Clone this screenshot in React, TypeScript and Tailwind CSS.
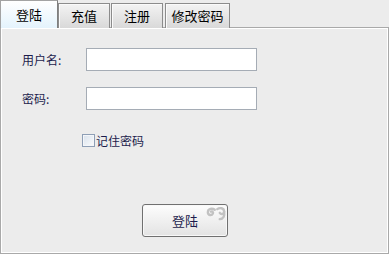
const font = { fontFamily: '"Noto Sans CJK SC", "Liberation Sans", sans-serif' }

function Tab({ label, active, width }: { label: string; active?: boolean; width: string }) {
  if (active) {
    return (
      <div
        className={`${width} h-[28px] flex items-center justify-center border border-b-0 border-[#a3a3a3] border-r-[#7f7f7f] bg-gradient-to-b from-[#ffffff] to-[#e4f3fc] text-[13px] text-black`}
      >
        {label}
      </div>
    )
  }
  return (
    <div
      className={`${width} h-[25px] flex items-center justify-center border border-b-0 border-[#8c8c8c] shadow-[inset_1px_1px_0_#fafafa] bg-gradient-to-b from-[#f3f3f3] to-[#d9d9d9] text-[13px] text-black`}
    >
      {label}
    </div>
  )
}

export default function App() {
  return (
    <div className="w-[389px] h-[254px] bg-[#ececec] flex flex-col overflow-hidden" style={font}>
      {/* Tabs */}
      <div className="relative z-10 flex items-end h-[28px] -mb-px">
        <Tab label="登陆" active width="w-[58px]" />
        <Tab label="充值" width="w-[52px]" />
        <div className="w-px" />
        <Tab label="注册" width="w-[52px]" />
        <div className="w-[2px]" />
        <Tab label="修改密码" width="w-[65px]" />
      </div>

      {/* Panel */}
      <div className="flex-1 border border-[#a9a9a9] shadow-[inset_1px_1px_0_#ffffff,inset_-1px_-1px_0_#ffffff] flex flex-col pt-[20px] pl-[21px]">
        <div className="flex items-center">
          <span className="w-[64px] text-[12px] text-[#1c1c4c]">用户名:</span>
          <input className="w-[171px] h-[23px] bg-white border border-[#a5acb5] outline-none px-1 text-[12px]" />
        </div>
        <div className="flex items-center mt-[16px]">
          <span className="w-[64px] text-[12px] text-[#1c1c4c]">密码:</span>
          <input type="password" className="w-[171px] h-[23px] bg-white border border-[#a5acb5] outline-none px-1 text-[12px]" />
        </div>

        <label className="flex items-center mt-[24px] ml-[60px] gap-[1px]">
          <span className="w-[13px] h-[13px] border border-[#8e9fb6] bg-gradient-to-br from-[#d8e1ec] to-[#fbfcfd] shadow-[inset_0_0_0_1px_#f4f6f9]" />
          <span className="text-[12px] text-[#1c1c4c] leading-[13px]">记住密码</span>
        </label>

        <div className="mt-[57px] ml-[120px]">
          <button className="relative w-[86px] h-[33px] rounded-[3px] border border-[#707070] bg-gradient-to-b from-[#fdfdfd] to-[#e3e3e3] shadow-[inset_0_0_0_1px_#f8f8f8] text-[13px] text-[#1c1c4c] flex items-center justify-center">
            登陆
            {/* decorative swirl */}
            <svg className="absolute right-[1px] top-[1px]" width="20" height="15" viewBox="0 0 16 12" fill="none" stroke="#c2c2c2" strokeWidth="1.9" strokeLinecap="round">
              <path d="M7 3 C5 1.5 1.5 2 1.5 5 C1.5 7.5 4.5 8 5.5 6 C6 5 5 4 4 4.5" />
              <path d="M9 2.5 C11 1 14.5 1.5 14.5 4.5 C14.5 6.5 12 7 11 5.5" />
              <path d="M14.5 4.5 C15 8 14 10.5 11 10.5" />
            </svg>
          </button>
        </div>
      </div>
    </div>
  )
}
